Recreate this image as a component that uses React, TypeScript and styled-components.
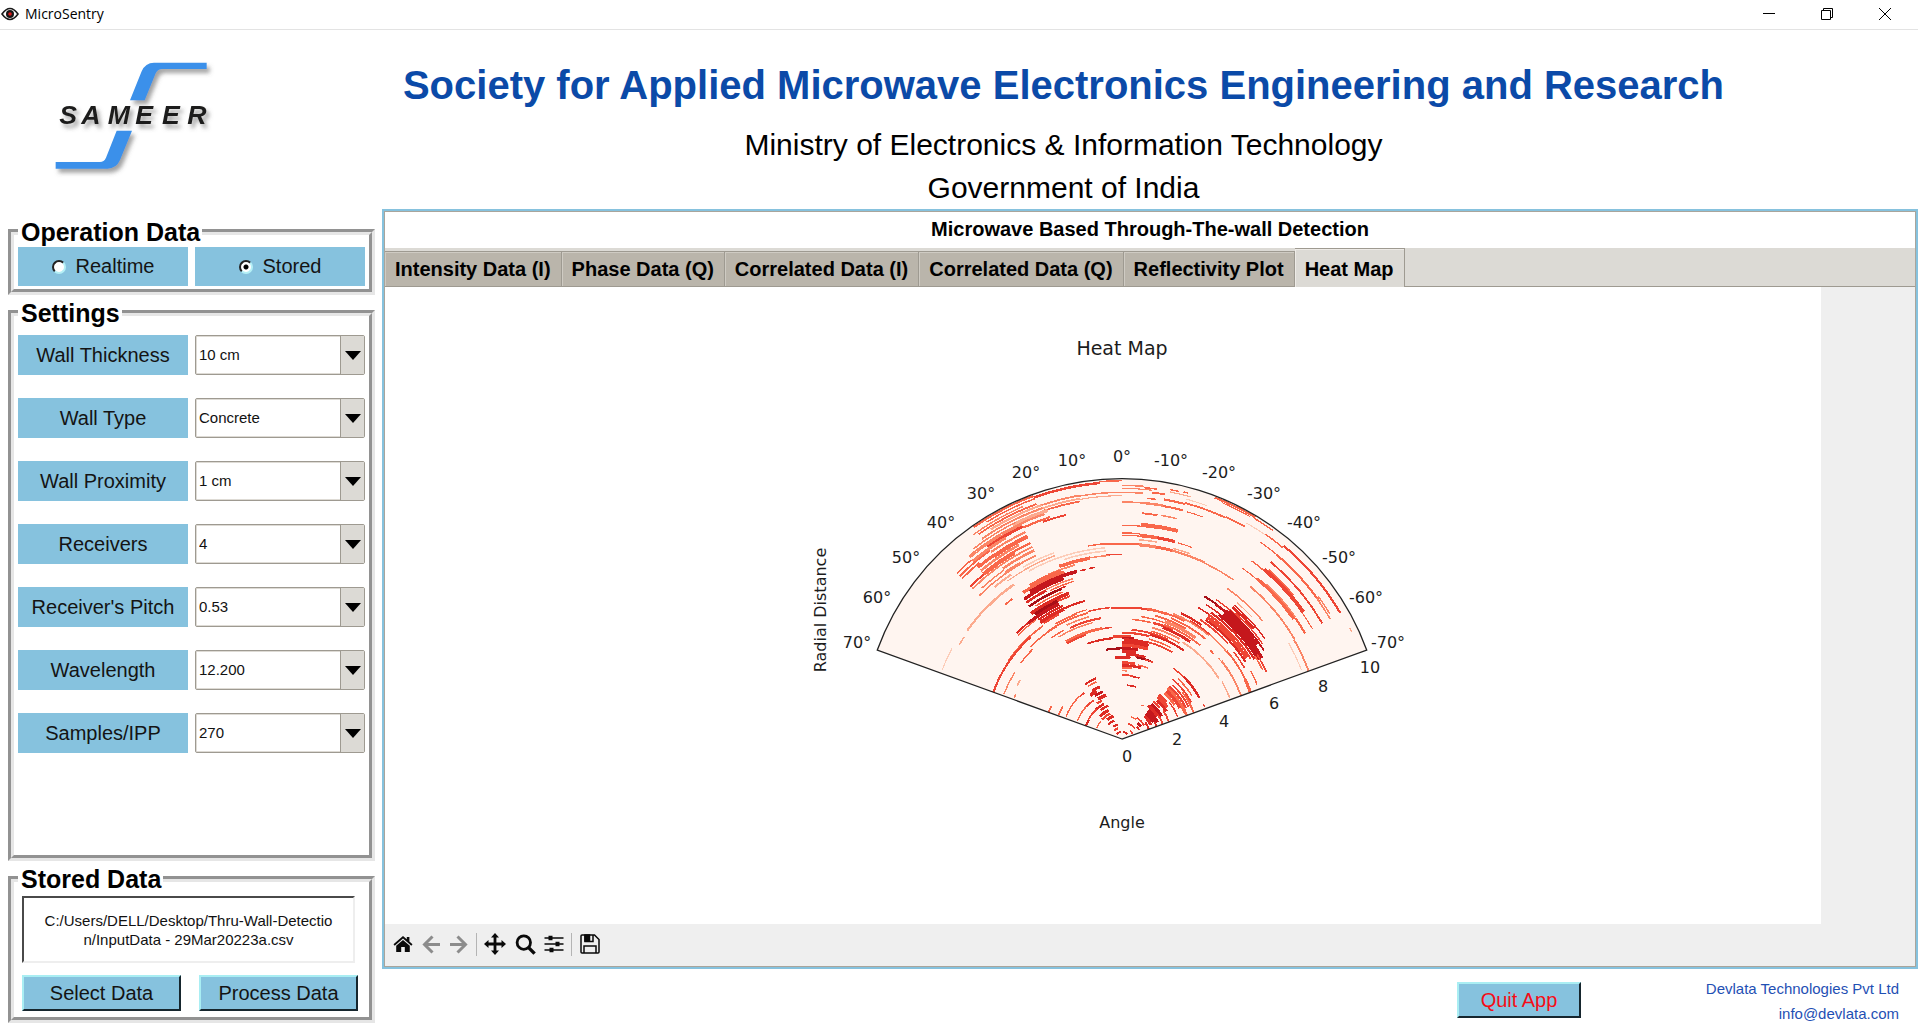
import React from "react";
import styled, { createGlobalStyle, css } from "styled-components";

const blue = "#86c2de";
const chrome = "#dcdad5";
const edge = "#9e9a91";

const GlobalStyle = createGlobalStyle`
  *, *::before, *::after { box-sizing: border-box; }
  body {
    margin: 0;
    background: #fff;
    color: #000;
    font-family: "Liberation Sans", Arial, sans-serif;
  }
  button, input, select, textarea { font-family: inherit; margin: 0; }
`;

/* ---------- window frame ---------- */

const Window = styled.div`
  display: flex;
  flex-direction: column;
  min-height: 100vh;
`;

const TitleBar = styled.header`
  display: flex;
  align-items: center;
  height: 30px;
  padding: 0 4px 2px 1px;
  border-bottom: 1px solid #e3e3e3;
`;

const WindowTitle = styled.span`
  flex: 1;
  margin-left: 6px;
  font: 14px/20px "Open Sans", "Noto Sans", sans-serif;
`;

const WindowButton = styled.button`
  display: grid;
  place-items: center;
  width: 58px;
  height: 26px;
  padding: 0;
  border: 0;
  background: none;
`;

const Banner = styled.div`
  display: flex;
  height: 179px;
`;

const LogoCell = styled.div`
  width: 209px;
  padding: 26px 0 0 50px;
`;

const Headings = styled.div`
  flex: 1;
  display: flex;
  flex-direction: column;
  justify-content: flex-end;
  text-align: center;
  white-space: nowrap;
`;

const Society = styled.h1`
  margin: 0;
  font-size: 40px;
  line-height: 76px;
  color: #0b4aa8;
`;

const Ministry = styled.p`
  margin: 0;
  font-size: 30px;
  line-height: 43px;
`;

const Workspace = styled.div`
  flex: 1;
  display: grid;
  grid-template-columns: 367px minmax(0, 1fr);
  column-gap: 7px;
  padding-left: 8px;
`;

/* ---------- sidebar ---------- */

const Sidebar = styled.aside`
  display: flex;
  flex-direction: column;
  gap: 4px;
  padding: 9px 0 6px;
`;

const Group = styled.fieldset<{ $grow?: boolean }>`
  flex: ${(p) => (p.$grow ? "1 0 auto" : "none")};
  min-width: 0;
  margin: 0;
  padding: 0 4px 3px;
  border: 6px groove #e6e6e6;
`;

const Legend = styled.legend`
  padding: 0 2px 0 3px;
  font-size: 25px;
  font-weight: bold;
  line-height: 28px;
`;

const Pair = styled.div`
  display: grid;
  grid-template-columns: 1fr 1fr;
  column-gap: 7px;
  padding-top: 1px;
`;

const SettingsGrid = styled(Pair)`
  row-gap: 23px;
  padding-top: 8px;
`;

const tile = css`
  display: flex;
  align-items: center;
  justify-content: center;
  background: ${blue};
  color: #141414;
  font-size: 20px;
`;

const RadioTile = styled.label`
  ${tile}
  gap: 10px;
  height: 39px;
`;

const Radio = styled.input`
  appearance: none;
  width: 14px;
  height: 14px;
  border: 2px solid;
  border-color: #222 #b5f0f6 #b5f0f6 #222;
  border-radius: 50%;
  background: #fff;
  &:checked {
    background: radial-gradient(circle, #000 0 2px, #fff 3px);
  }
`;

const FieldLabel = styled.label`
  ${tile}
  height: 40px;
`;

const SelectBox = styled.div`
  position: relative;
  height: 40px;
`;

const Select = styled.select`
  appearance: none;
  width: 100%;
  height: 100%;
  padding: 0 30px 2px 3px;
  border: 1px solid ${edge};
  border-radius: 2px;
  background: #fff;
  box-shadow: inset 0 0 0 1px #dedbd5;
  color: #111;
  font-size: 15px;
`;

const SelectArrow = styled.span`
  position: absolute;
  top: 1px;
  right: 1px;
  bottom: 1px;
  display: grid;
  place-items: center;
  width: 24px;
  border-left: 1px solid ${edge};
  background: ${chrome};
  pointer-events: none;
`;

const StoredBody = styled.div`
  padding: 3px 7px 3px 4px;
`;

const PathBox = styled.textarea`
  display: block;
  width: calc(100% - 3px);
  height: 67px;
  padding: 13px 4px 0;
  border: 2px solid;
  border-color: #4a4a4a #eee #eee #4a4a4a;
  background: #fff;
  color: #111;
  font-size: 15px;
  line-height: 19px;
  text-align: center;
  white-space: pre;
  overflow: hidden;
  resize: none;
`;

const ButtonRow = styled.div`
  display: flex;
  gap: 18px;
  margin-top: 12px;
`;

const PushButton = styled.button<{ $quit?: boolean }>`
  flex: ${(p) => (p.$quit ? "0 0 124px" : 1)};
  height: 36px;
  padding: 0;
  border: 2px solid;
  border-color: #a9eef3 #16262e #16262e #a9eef3;
  background: ${blue};
  color: ${(p) => (p.$quit ? "#f60d17" : "#141414")};
  font-size: 20px;
  white-space: nowrap;
`;

/* ---------- plot panel ---------- */

const Main = styled.main`
  display: flex;
  flex-direction: column;
`;

const Panel = styled.section`
  flex: 1;
  display: flex;
  flex-direction: column;
  border: 2px solid ${blue};
  background: #efefef;
  box-shadow: inset 0 0 0 1px #a9a59c;
  padding: 1px;
`;

const PanelTitle = styled.h2`
  margin: 0;
  padding-bottom: 2px;
  background: #fff;
  font-size: 20px;
  line-height: 34px;
  text-align: center;
`;

const TabBar = styled.div`
  display: flex;
  align-items: flex-end;
  height: 39px;
  background: ${chrome};
  border-bottom: 1px solid ${edge};
`;

const Tab = styled.button<{ $active?: boolean }>`
  height: 35px;
  padding: 0 10px;
  border: solid ${edge};
  border-width: 1px 1px 0 0;
  background: #bab5ab;
  box-shadow: inset 1px 1px 0 #cfcbc3;
  font-size: 20px;
  font-weight: bold;
  white-space: nowrap;
  ${(p) => p.$active && css`
    height: 39px;
    margin-bottom: -1px;
    padding: 2px 10px 0;
    background: ${chrome};
    box-shadow: inset 1px 1px 0 #eeebe7;
  `}
`;

const Figure = styled.div`
  flex: 1;
  display: flex;
  align-items: center;
  justify-content: center;
  width: calc(100% - 94px);
  padding: 0 10% 0 12.5%;
  background: #fff;
`;

const Toolbar = styled.div`
  display: flex;
  align-items: center;
  height: 42px;
  padding: 0 0 2px 3px;
`;

const ToolButton = styled.button<{ $w: number }>`
  display: grid;
  place-items: center;
  width: ${(p) => p.$w}px;
  height: 28px;
  padding: 0;
  border: 0;
  background: none;
  color: #0a0a0a;
  &:disabled { color: #8c8c8c; }
`;

const Divider = styled.span`
  width: 1px;
  height: 23px;
  margin: 0 3px 0 4px;
  background: #b4b4b4;
`;

const Footer = styled.footer`
  display: flex;
  justify-content: flex-end;
  align-items: flex-start;
  height: 60px;
  padding: 13px 19px 0 0;
`;

const Contact = styled.address`
  display: flex;
  flex-direction: column;
  width: 318px;
  margin-top: -6px;
  color: #1f50b4;
  font-size: 15px;
  line-height: 25px;
  font-style: normal;
  text-align: right;
`;

const Mail = styled.a`
  color: inherit;
  text-decoration: none;
`;

/* ---------- heat map ---------- */

const ChartText = styled.text`
  fill: #1c1c1c;
  font-family: "DejaVu Sans", sans-serif;
  text-anchor: middle;
`;

/* [radius, start angle, end angle, thickness, colour]; 781 units = radial distance 10 */
type Arc = [number, number, number, number, string];

const D = "#a80f17", C = "#c5171c", R = "#dd2b24", E = "#ee4534",
  O = "#f9674a", L = "#fb8566", P = "#fcaa8e", Q = "#fdcdb9";

const arcs: Arc[] = [
  [775, 0, 5, 3, O], [771, 5, 20, 6, E], [776, 20, 35, 5, O], [767, 20, 32, 3, O], [758, 23, 36, 3, L],
  [740, 0, 10, 3, L], [742, 10, 19, 4, L], [730, 0, 10, 2, P], [732, 10, 25, 4, P],
  [724, 10, 19, 4, O], [750, 20, 35, 4, O], [742, 19, 32, 5, P], [733, 19, 35, 4, L],
  [721, 18, 27, 9, P], [724, 26, 38, 3, L], [714, 19, 30, 5, L], [715, 30, 40, 4, L],
  [693, 14, 20, 4, E], [700, 18, 25, 5, O], [704, 25, 35, 8, E], [710, 25, 40, 3, L],
  [697, 30, 40, 7, L], [702, 40, 45, 3, O], [690, 35, 45, 4, O], [685, 25, 35, 5, L],
  [670, 25, 35, 11, O], [672, 35, 40, 8, O], [680, 39, 45, 4, O], [659, 28, 40, 6, L],
  [649, 25, 31, 5, O], [646, 30, 40, 11, O], [636, 25, 36, 4, L], [645, 40, 45, 5, E], [636, 36, 45, 4, L],
  [624, 25, 35, 6, L], [618, 35, 43, 3, L], [609, 30, 35, 8, L], [608, 25, 30, 4, L],
  [607, 35, 45, 3, L], [595, 34, 40, 5, P], [585, 30, 36, 2, P],
  [566, 35, 45, 6, P], [567, 45, 55, 5, P], [564, 57, 60, 3, P], [578, 62, 69, 2, Q],
  [534, 38, 41, 4, O],
  [595, 20, 30, 3, Q], [586, 20, 30, 3, P], [576, 5, 29, 3, Q], [566, 5, 18, 3, Q],
  [554, 0, 5, 3, E], [552, 4, 10, 3, L], [551, 10, 20, 9, O], [541, 15, 24, 4, L],
  [586, 0, 5, 4, O], [588, 5, 10, 3, O],
  [537, 20, 31, 8, O], [530, 19, 34, 8, O], [521, 15, 32, 9, C], [512, 20, 35, 8, C],
  [521, 9, 11, 3, R], [520, 12, 14, 3, R], [503, 17, 30, 3, L], [500, 27, 35, 6, R],
  [495, 17, 26, 3, O], [486, 22, 35, 6, D], [488, 20, 22, 3, R], [476, 22, 33, 3, O],
  [465, 20, 36, 9, R], [456, 20, 29, 4, E], [456, 25, 35, 9, D], [447, 25, 39, 9, C], [437, 24, 35, 5, R],
  [429, 15, 25, 5, R], [427, 24, 35, 10, R], [419, 27, 34, 5, E], [448, 39, 45, 4, R], [441, 36, 45, 3, O],
  [414, 35, 55, 4, O], [411, 42, 70, 5, E],
  [394, 0, 5, 4, E], [396, 5, 15, 3, E], [392, 15, 35, 4, O], [390, 30, 45, 3, O], [380, 45, 53, 3, O],
  [399, 20, 30, 4, O], [402, 15, 22, 2, O],
  [379, 58, 69, 3, L], [353, 60, 63, 3, P], [346, 67, 69, 3, L],
  [380, 15, 26, 3, L], [368, 10, 25, 5, E], [360, 14, 32, 3, L], [370, 28, 35, 3, O],
  [336, 5, 10, 3, E], [337, 10, 30, 7, O], [331, 19, 30, 5, E],
  [304, 5, 15, 5, R], [304, 15, 20, 4, R], [308, -5, 5, 8, E], [319, -15, 0, 5, E],
  [303, -7, 0, 7, C], [298, -15, -1, 8, R], [290, -16, 0, 9, R], [281, -16, 0, 8, E],
  [272, 0, 10, 5, D], [272, -10, 0, 6, C], [263, -9, 0, 9, R], [255, -16, -3, 7, R], [249, -20, -10, 5, D],
  [245, -6, 5, 6, R], [248, -22, -16, 3, E],
  [229, -10, 0, 7, E], [221, -15, 0, 6, R], [227, -20, -12, 3, O], [214, -8, 0, 4, O],
  [205, -4, 0, 3, L], [192, -10, 0, 4, E], [190, -16, -10, 3, R], [162, -15, -5, 4, R],
  [198, 23, 34, 5, R], [188, 24, 33, 3, O],
  [179, 39, 45, 4, E], [181, 45, 68, 3, O], [170, 23, 32, 7, R], [162, 28, 36, 9, R], [153, 22, 32, 6, C],
  [144, 36, 48, 4, E], [145, 48, 68, 3, O], [140, 20, 31, 9, R], [130, 28, 35, 6, E],
  [118, 27, 42, 6, R], [117, 40, 60, 4, E], [115, 60, 70, 6, R], [108, 22, 37, 6, R],
  [95, 25, 44, 8, R], [84, 25, 45, 5, E], [83, 50, 66, 3, O], [73, 20, 38, 8, R], [60, 23, 45, 5, R],
  [45, 15, 35, 5, R], [34, 20, 45, 5, E], [22, 5, 50, 4, R], [234, 65, 70, 4, O], [203, 61, 69, 4, O],

  [761, -5, 0, 3, L], [752, -7, 0, 2, L], [740, -5, 0, 3, L], [757, -8, -5, 3, O], [745, -10, -7, 4, O],
  [762, -13, -11, 3, O], [764, -15, -14, 3, O], [726, -8, -6, 3, O], [711, -5, 0, 3, L],
  [755, -16, -11, 2, P], [745, -20, -15, 2, Q],
  [730, -15, -10, 5, O], [733, -25, -15, 4, O], [736, -30, -25, 4, O],
  [711, -10, -5, 6, L], [710, -15, -10, 5, O], [709, -20, -16, 2, O],
  [680, -9, -5, 4, O], [681, -14, -10, 3, L],
  [776, -31, -21, 5, O], [770, -30, -23, 2, O], [772, -36, -31, 3, O],
  [748, -35, -30, 2, Q], [750, -40, -35, 3, O], [756, -60, -40, 5, E],
  [722, -40, -35, 2, O], [722, -55, -40, 5, O], [728, -59, -54, 3, L], [721, -60, -54, 3, L],
  [694, -60, -40, 4, E], [661, -41, -36, 3, O], [664, -55, -40, 10, E], [672, -50, -41, 3, O], [660, -60, -55, 2, O],
  [627, -40, -35, 2, O], [629, -55, -40, 8, O], [636, -55, -43, 3, L], [634, -60, -55, 5, O],
  [598, -60, -40, 4, L], [596, -70, -60, 4, L], [577, -69, -60, 2, Q], [760, -65, -64, 3, P],
  [641, -5, 0, 2, O], [645, -10, -5, 11, O], [646, -15, -10, 10, O],
  [618, -5, 0, 3, O], [611, -5, 0, 2, O], [613, -10, -5, 9, O], [613, -15, -10, 8, E], [600, -10, -5, 3, P], [612, -20, -16, 2, O],
  [586, -5, 0, 5, O], [585, -10, -5, 8, L], [585, -15, -10, 7, O], [585, -25, -15, 5, L], [583, -35, -25, 3, L], [592, -20, -15, 3, P],
  [551, -50, -35, 3, L], [535, -47, -40, 2, P],
  [394, -6, 0, 5, E], [396, -12, -6, 5, E], [398, -20, -11, 6, O], [400, -28, -19, 4, O],
  [360, -14, -5, 3, O], [372, -22, -9, 3, O], [361, -25, -15, 6, E], [356, -35, -20, 7, R],
  [383, -30, -15, 4, O], [375, -36, -20, 8, L], [391, -40, -22, 4, O], [366, -40, -20, 4, O],
  [406, -40, -22, 4, L], [346, -30, -15, 4, L], [417, -35, -25, 5, R], [410, -42, -30, 3, E],
  [329, -25, -5, 4, E], [324, -35, -15, 5, R], [311, -28, -15, 3, O], [301, -30, -15, 4, E], [335, -31, -15, 3, O],
  [343, -58, -32, 4, P], [346, -69, -60, 3, P], [378, -58, -50, 2, L], [380, -70, -52, 4, L], [375, -47, -45, 4, O],
  [409, -52, -40, 3, L], [411, -70, -50, 4, O], [410, -70, -64, 8, O], [425, -60, -52, 3, E],
  [494, -35, -30, 5, D], [492, -41, -35, 6, C], [456, -38, -30, 3, R], [476, -40, -32, 3, R],
  [505, -45, -34, 3, E], [524, -55, -40, 3, R], [516, -50, -40, 7, R], [509, -56, -42, 3, E], [502, -58, -40, 4, C],
  [493, -55, -39, 11, C], [483, -60, -39, 13, C], [473, -60, -38, 7, C], [464, -59, -35, 5, R],
  [455, -58, -35, 5, E], [446, -57, -35, 9, E], [437, -58, -35, 5, R], [428, -48, -33, 4, E],
  [478, -65, -58, 3, E], [470, -64, -58, 3, O], [437, -68, -62, 3, O],
  [262, -45, -36, 3, E], [263, -62, -45, 6, R], [266, -69, -67, 3, E], [247, -58, -43, 3, O],
  [235, -62, -40, 4, E], [229, -70, -52, 4, O], [222, -64, -43, 4, E],
  [213, -64, -42, 5, E], [205, -68, -42, 7, O], [197, -62, -43, 8, E], [207, -70, -60, 5, O],
  [188, -57, -43, 6, O], [180, -68, -52, 3, E], [175, -50, -40, 5, E],
  [166, -55, -40, 9, E], [157, -58, -42, 7, R], [150, -70, -55, 4, E], [147, -50, -40, 6, E],
  [137, -60, -40, 9, C], [127, -57, -38, 9, R], [130, -70, -57, 4, E],
  [117, -65, -42, 9, C], [107, -62, -43, 9, C], [97, -64, -45, 8, R], [110, -70, -62, 4, R],
  [86, -70, -54, 5, R], [78, -58, -35, 4, E], [68, -57, -44, 7, C], [58, -62, -50, 4, R],
  [72, -36, -22, 3, O], [50, -50, -20, 3, E], [35, -65, -45, 4, E], [22, -50, -10, 4, R], [118, -33, -30, 3, O],
];

const arcPath = (r: number, a: number, b: number) => {
  const pt = (deg: number) => {
    const t = (deg * Math.PI) / 180;
    return `${(-r * Math.sin(t)).toFixed(1)} ${(-r * Math.cos(t)).toFixed(1)}`;
  };
  return `M${pt(a)}A${r} ${r} 0 0 0 ${pt(b)}`;
};

const ticks: [string, number, number][] = [
  ["70°", -265, -97], ["60°", -245, -142], ["50°", -216, -182], ["40°", -181, -217],
  ["30°", -141, -246], ["20°", -96, -267], ["10°", -50, -279], ["0°", 0, -283],
  ["-10°", 49, -279], ["-20°", 97, -267], ["-30°", 142, -246], ["-40°", 182, -217],
  ["-50°", 217, -182], ["-60°", 244, -142], ["-70°", 266, -97],
  ["0", 5, 17], ["2", 55, 0], ["4", 102, -18], ["6", 152, -36], ["8", 201, -53], ["10", 248, -72],
];

const HeatMap = () => (
  <svg width="620" height="552" viewBox="-310 -409 620 552" role="img" aria-label="Heat Map">
    <path d="M0 0L-244.7 -89A260.4 260.4 0 0 1 244.7 -89Z" fill="#fff5f0" />
    <g transform="scale(0.3333)" fill="none" shapeRendering="crispEdges">
      {arcs.map(([r, a, b, w, c], i) => (
        <path key={i} d={arcPath(r, a, b)} stroke={c} strokeWidth={w + 1.5} />
      ))}
    </g>
    <path d="M0 0L-244.7 -89A260.4 260.4 0 0 1 244.7 -89Z" fill="none" stroke="#222" strokeWidth="1.3" />
    {ticks.map(([t, x, y], i) => (
      <ChartText key={i} x={x} y={y + 6} fontSize="16">{t}</ChartText>
    ))}
    <ChartText x="0" y="-384" fontSize="19">Heat Map</ChartText>
    <ChartText x="0" y="89" fontSize="16">Angle</ChartText>
    <ChartText transform="translate(-296 -129) rotate(-90)" fontSize="16">Radial Distance</ChartText>
  </svg>
);

/* ---------- icons ---------- */

const EyeIcon = () => (
  <svg width="18" height="14" viewBox="0 0 18 14">
    <path d="M1 7Q9 -4 17 7Q9 18 1 7Z" fill="#fff" stroke="#1a1a1a" strokeWidth="1.6" />
    <circle cx="9" cy="7" r="4" fill="#161616" />
    <circle cx="9" cy="7" r="1.8" fill="#d81a1a" />
  </svg>
);

const Logo = () => (
  <svg width="165" height="124" viewBox="150 168 495 372" role="img" aria-label="SAMEER">
    <defs>
      <filter id="soft" x="-10%" y="-10%" width="125%" height="130%">
        <feDropShadow dx="9" dy="12" stdDeviation="7" floodColor="#555" floodOpacity="0.55" />
      </filter>
    </defs>
    <g filter="url(#soft)">
      <path fill="#3a90ea" d="M390 301L425 214Q436 188 462 188H620V207H487Q473 207 467 220L434 301Z" />
      <path fill="#3a90ea" d="M350 392H396L360 480Q349 506 322 506H167V486H300Q312 486 318 473Z" />
      <text
        x="178 244 323 406 486 562"
        y="372"
        fill="#1d1d1b"
        fontFamily="Liberation Sans, Arial, sans-serif"
        fontSize="80"
        fontWeight="bold"
        fontStyle="italic"
      >
        SAMEER
      </text>
    </g>
  </svg>
);

const HomeIcon = () => (
  <svg width="20" height="18" viewBox="0 0 20 18" fill="currentColor">
    <path d="M10 1L0.5 9.3L1.7 10.7L10 3.6L18.3 10.7L19.5 9.3L16.4 6.6V2H13.8V4.3Z" />
    <path d="M10 4.9L3.2 10.7V17H8.2V12H11.8V17H16.8V10.7Z" />
  </svg>
);

const ArrowIcon = ({ flip }: { flip?: boolean }) => (
  <svg width="19" height="19" viewBox="0 0 19 19" fill="none" stroke="currentColor" strokeWidth="3">
    <path d={flip ? "M1 9.5H16M8.5 1.5L16.5 9.5L8.5 17.5" : "M18 9.5H3M10.5 1.5L2.5 9.5L10.5 17.5"} />
  </svg>
);

const MoveIcon = () => (
  <svg width="22" height="22" viewBox="0 0 22 22" fill="currentColor">
    <path d="M11 0L15 4.5H12.4V9.6H17.5V7L22 11L17.5 15V12.4H12.4V17.5H15L11 22L7 17.5H9.6V12.4H4.5V15L0 11L4.5 7V9.6H9.6V4.5H7Z" />
  </svg>
);

const SearchIcon = () => (
  <svg width="21" height="21" viewBox="0 0 21 21" fill="none" stroke="currentColor">
    <circle cx="8.8" cy="8.6" r="6.7" strokeWidth="2.8" />
    <path d="M13.6 13.6L19.6 19.6" strokeWidth="3.4" />
  </svg>
);

const SlidersIcon = () => (
  <svg width="20" height="18" viewBox="0 0 20 18" fill="currentColor">
    <path d="M0.5 2.2H19.5V3.8H0.5ZM0.5 8.2H19.5V9.8H0.5ZM0.5 14.2H19.5V15.8H0.5Z" />
    <path d="M4.5 0.8H8.5V5.2H4.5ZM11.5 6.8H15.5V11.2H11.5ZM5.5 12.8H9.5V17.2H5.5Z" />
  </svg>
);

const SaveIcon = () => (
  <svg width="20" height="20" viewBox="0 0 20 20" fill="none" stroke="currentColor" strokeWidth="1.5">
    <path d="M1 2Q1 1 2 1H14.5L19 5.5V18Q19 19 18 19H2Q1 19 1 18Z" />
    <path d="M5 1V7.5H13V1" />
    <path d="M5 1H9.5V7H5Z" fill="currentColor" />
    <path d="M4 19V12H16V19" />
  </svg>
);

/* ---------- page ---------- */

const settings: [string, string, string][] = [
  ["thickness", "Wall Thickness", "10 cm"],
  ["type", "Wall Type", "Concrete"],
  ["proximity", "Wall Proximity", "1 cm"],
  ["receivers", "Receivers", "4"],
  ["pitch", "Receiver's Pitch", "0.53"],
  ["wavelength", "Wavelength", "12.200"],
  ["samples", "Samples/IPP", "270"],
];

const tabs = [
  "Intensity Data (I)", "Phase Data (Q)", "Correlated Data (I)",
  "Correlated Data (Q)", "Reflectivity Plot", "Heat Map",
];

export default function App() {
  return (
    <Window>
      <GlobalStyle />
      <TitleBar>
        <EyeIcon />
        <WindowTitle>MicroSentry</WindowTitle>
        <WindowButton aria-label="Minimize">
          <svg width="12" height="12" stroke="#000"><path d="M0 5.5H12" /></svg>
        </WindowButton>
        <WindowButton aria-label="Restore">
          <svg width="12" height="12" stroke="#000" fill="none"><path d="M0.5 2.5H9.5V11.5H0.5ZM2.5 2.5V0.5H11.5V9.5H9.5" /></svg>
        </WindowButton>
        <WindowButton aria-label="Close">
          <svg width="12" height="12" stroke="#000"><path d="M0 0L12 12M12 0L0 12" /></svg>
        </WindowButton>
      </TitleBar>

      <Banner>
        <LogoCell><Logo /></LogoCell>
        <Headings>
          <Society>Society for Applied Microwave Electronics Engineering and Research</Society>
          <Ministry>Ministry of Electronics &amp; Information Technology</Ministry>
          <Ministry>Government of India</Ministry>
        </Headings>
      </Banner>

      <Workspace>
        <Sidebar>
          <Group>
            <Legend>Operation Data</Legend>
            <Pair>
              <RadioTile><Radio type="radio" name="source" />Realtime</RadioTile>
              <RadioTile><Radio type="radio" name="source" defaultChecked />Stored</RadioTile>
            </Pair>
          </Group>

          <Group $grow>
            <Legend>Settings</Legend>
            <SettingsGrid>
              {settings.map(([id, label, value]) => (
                <React.Fragment key={id}>
                  <FieldLabel htmlFor={id}>{label}</FieldLabel>
                  <SelectBox>
                    <Select id={id} defaultValue={value}><option>{value}</option></Select>
                    <SelectArrow>
                      <svg width="16" height="9"><path d="M0 0H16L8 9Z" /></svg>
                    </SelectArrow>
                  </SelectBox>
                </React.Fragment>
              ))}
            </SettingsGrid>
          </Group>

          <Group>
            <Legend>Stored Data</Legend>
            <StoredBody>
              <PathBox
                readOnly
                aria-label="Stored data file"
                value={"C:/Users/DELL/Desktop/Thru-Wall-Detectio\nn/InputData - 29Mar20223a.csv"}
              />
              <ButtonRow>
                <PushButton>Select Data</PushButton>
                <PushButton>Process Data</PushButton>
              </ButtonRow>
            </StoredBody>
          </Group>
        </Sidebar>

        <Main>
          <Panel>
            <PanelTitle>Microwave Based Through-The-wall Detection</PanelTitle>
            <TabBar role="tablist">
              {tabs.map((t) => (
                <Tab key={t} role="tab" aria-selected={t === "Heat Map"} $active={t === "Heat Map"}>{t}</Tab>
              ))}
            </TabBar>
            <Figure><HeatMap /></Figure>
            <Toolbar>
              <ToolButton $w={30} aria-label="Home"><HomeIcon /></ToolButton>
              <ToolButton $w={27} aria-label="Back" disabled><ArrowIcon /></ToolButton>
              <ToolButton $w={27} aria-label="Forward" disabled><ArrowIcon flip /></ToolButton>
              <Divider />
              <ToolButton $w={30} aria-label="Pan"><MoveIcon /></ToolButton>
              <ToolButton $w={30} aria-label="Zoom"><SearchIcon /></ToolButton>
              <ToolButton $w={27} aria-label="Configure subplots"><SlidersIcon /></ToolButton>
              <Divider />
              <ToolButton $w={29} aria-label="Save"><SaveIcon /></ToolButton>
            </Toolbar>
          </Panel>
          <Footer>
            <PushButton $quit>Quit App</PushButton>
            <Contact>
              <span>Devlata Technologies Pvt Ltd</span>
              <Mail href="mailto:info@devlata.com">info@devlata.com</Mail>
            </Contact>
          </Footer>
        </Main>
      </Workspace>
    </Window>
  );
}
